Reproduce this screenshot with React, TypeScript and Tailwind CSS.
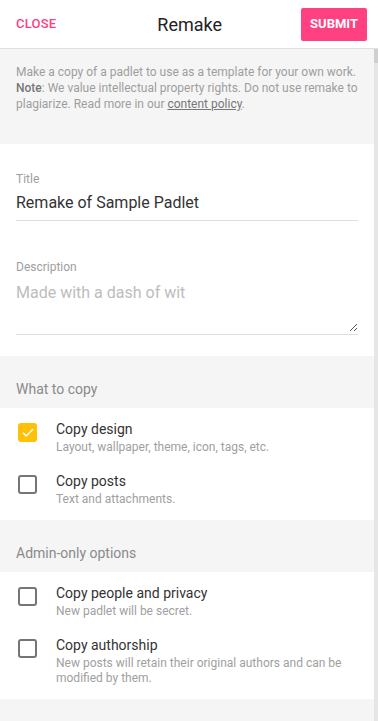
import { Check } from "lucide-react";

const font = { fontFamily: "Roboto, 'Noto Sans', Arial, sans-serif" };

interface Option {
  title: string;
  hint: string;
  checked?: boolean;
}

const whatToCopy: Option[] = [
  { title: "Copy design", hint: "Layout, wallpaper, theme, icon, tags, etc.", checked: true },
  { title: "Copy posts", hint: "Text and attachments." },
];

const adminOnly: Option[] = [
  { title: "Copy people and privacy", hint: "New padlet will be secret." },
  {
    title: "Copy authorship",
    hint: "New posts will retain their original authors and can be modified by them.",
  },
];

function Checkbox({ checked }: { checked?: boolean }) {
  if (checked) {
    return (
      <span className="mt-[4px] ml-[2px] flex h-[19px] w-[19px] shrink-0 items-center justify-center rounded-[3px] bg-[#ffc107]">
        <Check className="h-[14px] w-[14px] text-white" strokeWidth={2.5} />
      </span>
    );
  }
  return (
    <span className="mt-[4px] ml-[2px] h-[19px] w-[19px] shrink-0 rounded-[3px] border-2 border-[#757575]" />
  );
}

function OptionGroup({ heading, options }: { heading: string; options: Option[] }) {
  return (
    <>
      <div className="bg-[#f5f5f5] px-4 pt-[23px] pb-[9px] text-[14px] leading-[20px] text-[#8a8a8a]">
        {heading}
      </div>
      <div className="flex flex-col gap-[16px] bg-white pt-[11px] pb-[13px] pl-4 pr-5">
        {options.map((o) => (
          <label key={o.title} className="flex gap-[19px]">
            <Checkbox checked={o.checked} />
            <div>
              <div className="text-[14px] leading-[20px] text-[#333]">{o.title}</div>
              <div className="mt-[1px] text-[12px] leading-[15px] text-[#a0a0a0]">{o.hint}</div>
            </div>
          </label>
        ))}
      </div>
    </>
  );
}

export default function App() {
  return (
    <div className="flex h-[721px] w-[378px] flex-col overflow-hidden bg-white" style={font}>
      <header className="flex h-[49px] shrink-0 items-center justify-between border-b border-[#e0e0e0] bg-white pl-4 pr-[11px]">
        <button className="text-[13px] font-medium tracking-[0.2px] text-[#ff4081]">CLOSE</button>
        <h1 className="ml-[22px] text-[18px] text-[#222]">Remake</h1>
        <button className="h-[33px] rounded-[2px] bg-[#ff4081] px-[9px] text-[13px] font-bold text-white">
          SUBMIT
        </button>
      </header>

      <div className="flex min-h-0 flex-1">
        <div className="flex-1 bg-[#f5f5f5]">
          <p className="px-4 pt-[15px] pb-[32px] text-[12px] leading-[16px] text-[#9e9e9e]">
            Make a copy of a padlet to use as a template for your own work.{" "}
            <b className="font-medium text-[#777]">Note</b>: We value intellectual property rights. Do not use
            remake to plagiarize. Read more in our{" "}
            <span className="text-[#777] underline">content policy</span>.
          </p>

          <div className="bg-white px-4 pt-[27px] pb-[21px]">
            <div className="text-[12px] leading-[16px] text-[#9e9e9e]">Title</div>
            <div className="mt-[4px] border-b border-[#dedede] pb-[5px] text-[16px] leading-[24px] text-[#333]">
              Remake of Sample Padlet
            </div>

            <div className="mt-[38px] text-[12px] leading-[16px] text-[#9e9e9e]">Description</div>
            <div className="relative mt-[6px] h-[54px] border-b border-[#dedede] text-[16px] leading-[24px] text-[#bdbdbd]">
              Made with a dash of wit
              <svg className="absolute right-0 bottom-[2px]" width="9" height="9" viewBox="0 0 9 9">
                <path d="M8 1 L1 8 M8 5 L5 8" stroke="#555" strokeWidth="1" fill="none" />
              </svg>
            </div>
          </div>

          <OptionGroup heading="What to copy" options={whatToCopy} />
          <OptionGroup heading="Admin-only options" options={adminOnly} />
        </div>

        <div className="flex w-[4px] shrink-0 flex-col bg-[#e6e6e6]">
          <div className="h-[14px] bg-[#cfcfcf]" />
        </div>
      </div>
    </div>
  );
}
